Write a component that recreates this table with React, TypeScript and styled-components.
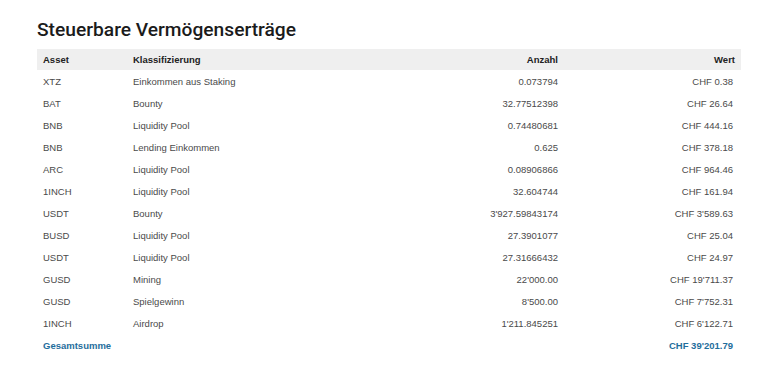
import React from "react";
import styled, { createGlobalStyle } from "styled-components";

const Global = createGlobalStyle`
  html, body { margin: 0; padding: 0; background: #ffffff; }
  body { font-family: "Liberation Sans", Arial, sans-serif; }
`;

const Page = styled.div`
  padding: 16px 32px 0 37px;
  width: 705px;
`;

const Title = styled.h1`
  margin: 0 0 5px 0;
  font-family: Roboto, "Noto Sans", sans-serif;
  font-weight: 500;
  font-size: 19.2px;
  line-height: 28px;
  color: #1b1b1b;
`;

const Table = styled.table`
  width: 704px;
  border-collapse: collapse;
  table-layout: fixed;
  font-family: "Liberation Sans", Arial, sans-serif;
  font-size: 9.5px;
`;

const HeadRow = styled.tr`
  background: #efefef;
`;

const Th = styled.th<{ $right?: boolean; $w?: number }>`
  height: 21px;
  padding: 0 6px;
  font-weight: 700;
  color: #222;
  text-align: ${(p) => (p.$right ? "right" : "left")};
  width: ${(p) => (p.$w ? `${p.$w}px` : "auto")};
`;

const Td = styled.td<{ $right?: boolean; $total?: boolean; $last?: boolean }>`
  height: 22px;
  padding: 0 ${(p) => (p.$last ? "8px" : "6px")} 0 6px;
  color: ${(p) => (p.$total ? "#1f6e9c" : "#4a4a4a")};
  font-weight: ${(p) => (p.$total ? 700 : 400)};
  text-align: ${(p) => (p.$right ? "right" : "left")};
  white-space: nowrap;
`;

const rows: [string, string, string, string][] = [
  ["XTZ", "Einkommen aus Staking", "0.073794", "CHF 0.38"],
  ["BAT", "Bounty", "32.77512398", "CHF 26.64"],
  ["BNB", "Liquidity Pool", "0.74480681", "CHF 444.16"],
  ["BNB", "Lending Einkommen", "0.625", "CHF 378.18"],
  ["ARC", "Liquidity Pool", "0.08906866", "CHF 964.46"],
  ["1INCH", "Liquidity Pool", "32.604744", "CHF 161.94"],
  ["USDT", "Bounty", "3'927.59843174", "CHF 3'589.63"],
  ["BUSD", "Liquidity Pool", "27.3901077", "CHF 25.04"],
  ["USDT", "Liquidity Pool", "27.31666432", "CHF 24.97"],
  ["GUSD", "Mining", "22'000.00", "CHF 19'711.37"],
  ["GUSD", "Spielgewinn", "8'500.00", "CHF 7'752.31"],
  ["1INCH", "Airdrop", "1'211.845251", "CHF 6'122.71"],
];

export default function App() {
  return (
    <>
      <Global />
      <Page>
        <Title>Steuerbare Vermögenserträge</Title>
        <Table>
          <thead>
            <HeadRow>
              <Th $w={78}>Asset</Th>
              <Th>Klassifizierung</Th>
              <Th $right $w={168}>Anzahl</Th>
              <Th $right $w={165}>Wert</Th>
            </HeadRow>
          </thead>
          <tbody>
            {rows.map((r, i) => (
              <tr key={i}>
                <Td>{r[0]}</Td>
                <Td>{r[1]}</Td>
                <Td $right>{r[2]}</Td>
                <Td $right $last>{r[3]}</Td>
              </tr>
            ))}
            <tr>
              <Td $total>Gesamtsumme</Td>
              <Td />
              <Td $right />
              <Td $right $last $total>CHF 39'201.79</Td>
            </tr>
          </tbody>
        </Table>
      </Page>
    </>
  );
}
